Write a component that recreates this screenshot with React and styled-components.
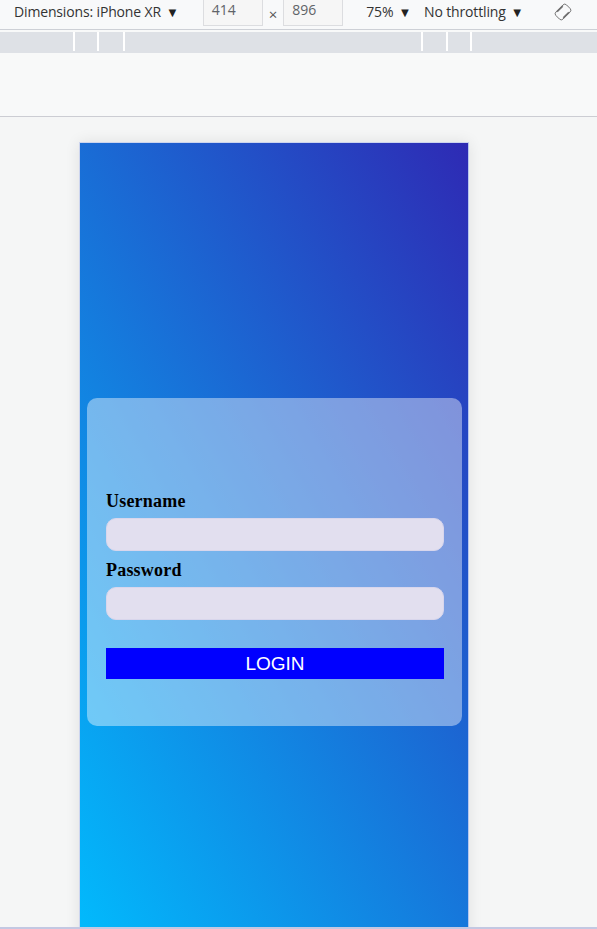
import React from "react";
import styled, { createGlobalStyle } from "styled-components";

const GlobalStyle = createGlobalStyle`
  html, body {
    margin: 0;
    padding: 0;
    background: #f8f9f9;
    overflow: hidden;
  }
  * {
    box-sizing: border-box;
  }
`;

const Window = styled.div`
  width: 597px;
  height: 929px;
  display: flex;
  flex-direction: column;
  overflow: hidden;
  font-family: "Open Sans", "Noto Sans", sans-serif;
`;

const Toolbar = styled.div`
  height: 30px;
  flex-shrink: 0;
  display: flex;
  align-items: center;
  background: #f8f9fa;
  border-bottom: 1px solid #cdd0d6;
  font-size: 14px;
  color: #333;
  padding: 0 0 6px 14px;
`;

const ToolText = styled.span`
  margin-left: ${p => p.gap || 0}px;
  white-space: nowrap;
  letter-spacing: -0.15px;
`;

const Caret = styled.span`
  font-size: 13px;
  color: #222;
  margin-left: 5px;
`;

const SizeBox = styled.div`
  width: 60px;
  height: 30px;
  margin-top: -1px;
  margin-left: ${p => p.gap || 0}px;
  border: 1px solid #dcdde0;
  border-top: none;
  background: #f6f6f6;
  color: #5f6368;
  display: flex;
  align-items: center;
  padding-left: 8px;
  padding-bottom: 3px;
`;

const Times = styled.span`
  margin: 4px 6px 0 6px;
  color: #555;
  font-size: 15px;
`;

const RotateIcon = styled.svg`
  width: 20px;
  height: 20px;
  margin-left: 30px;
`;

const Ruler = styled.div`
  margin-top: 2px;
  height: 21px;
  flex-shrink: 0;
  display: flex;
  background: #dee1e6;
`;

const Segment = styled.div`
  width: ${p => p.w}px;
  height: 19px;
  flex-shrink: 0;
  border-right: ${p => (p.last ? "none" : "2px solid #ffffff")};
`;

const Blank = styled.div`
  height: 64px;
  flex-shrink: 0;
  background: #f8f9f9;
  border-bottom: 1px solid #cccdd3;
`;

const Viewport = styled.div`
  flex: 1;
  background: #f5f6f6;
  padding: 25px 0 0 79px;
  overflow: hidden;
  border-bottom: 2px solid #c3c8e2;
`;

const Device = styled.div`
  width: 390px;
  height: 840px;
  border: 1px solid #cdd5ee;
  border-right-color: #b7c7ef;
  background: linear-gradient(60deg, #00bfff 0%, #2e2ab4 100%);
  box-shadow: 0 0 14px rgba(0, 0, 0, 0.09);
  display: flex;
  flex-direction: column;
  padding: 255px 6px 0 7px;
`;

const Card = styled.form`
  height: 328px;
  border-radius: 10px;
  background: rgba(255, 255, 255, 0.42);
  padding: 93px 18px 0 19px;
  display: flex;
  flex-direction: column;
`;

const Label = styled.label`
  font-family: "Liberation Serif", "Times New Roman", serif;
  font-weight: bold;
  font-size: 18px;
  line-height: 21px;
  letter-spacing: 0.2px;
  color: #000;
  margin-top: ${p => p.top || 0}px;
`;

const Field = styled.input`
  height: 33px;
  margin-top: 6px;
  border: 1px solid #d8d6ec;
  border-radius: 10px;
  background: #e2dfef;
  outline: none;
`;

const LoginButton = styled.button`
  margin-top: 28px;
  height: 31px;
  border: none;
  background: #0000ff;
  color: #fff;
  font-family: "Liberation Sans", Arial, sans-serif;
  font-size: 19px;
  padding: 0;
`;

export default function App() {
  return (
    <>
      <GlobalStyle />
      <Window>
        <Toolbar>
          <ToolText>
            Dimensions: iPhone XR<Caret>▼</Caret>
          </ToolText>
          <SizeBox gap={24}>414</SizeBox>
          <Times>×</Times>
          <SizeBox>896</SizeBox>
          <ToolText gap={23}>
            75%<Caret>▼</Caret>
          </ToolText>
          <ToolText gap={13}>
            No throttling<Caret>▼</Caret>
          </ToolText>
          <RotateIcon viewBox="0 0 24 24" fill="none" stroke="#707070">
            <rect
              x="6"
              y="3"
              width="12"
              height="18"
              rx="3"
              transform="rotate(45 12 12)"
              strokeWidth="1.1"
            />
            <path d="M4.9 11.6 L11.6 4.9" strokeWidth="2" />
            <path d="M12.4 19.1 L19.1 12.4" strokeWidth="2" />
          </RotateIcon>
        </Toolbar>
        <Ruler>
          <Segment w={75} />
          <Segment w={24} />
          <Segment w={26} />
          <Segment w={298} />
          <Segment w={25} />
          <Segment w={24} />
          <Segment w={125} last />
        </Ruler>
        <Blank />
        <Viewport>
          <Device>
            <Card onSubmit={e => e.preventDefault()}>
              <Label>Username</Label>
              <Field type="text" />
              <Label top={9}>Password</Label>
              <Field type="password" />
              <LoginButton type="submit">LOGIN</LoginButton>
            </Card>
          </Device>
        </Viewport>
      </Window>
    </>
  );
}
